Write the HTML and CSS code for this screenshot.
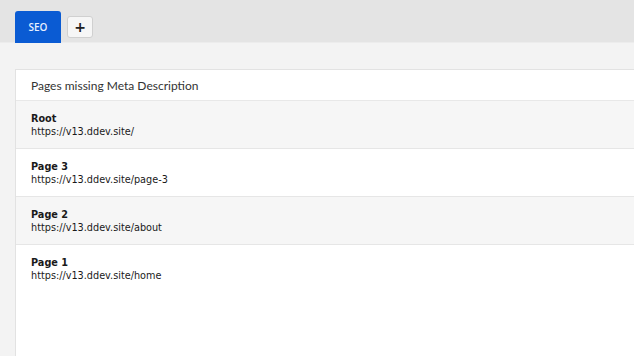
FILE: index.html
```html
<!DOCTYPE html>
<html lang="en">
<head>
    <meta charset="UTF-8">
    <meta name="viewport" content="width=device-width, initial-scale=1.0">
    <title>SEO</title>
    <link rel="stylesheet" href="styles.css">
</head>
<body>
    <div class="tabbar">
        <button class="tab active">SEO</button>
        <button class="tab-add">+</button>
    </div>
    <div class="content">
        <div class="panel">
            <div class="panel-heading">Pages missing Meta Description</div>
            <div class="row">
                <div class="row-title">Root</div>
                <div class="row-url">https://v13.ddev.site/</div>
            </div>
            <div class="row">
                <div class="row-title">Page 3</div>
                <div class="row-url">https://v13.ddev.site/page-3</div>
            </div>
            <div class="row">
                <div class="row-title">Page 2</div>
                <div class="row-url">https://v13.ddev.site/about</div>
            </div>
            <div class="row">
                <div class="row-title">Page 1</div>
                <div class="row-url">https://v13.ddev.site/home</div>
            </div>
        </div>
    </div>
</body>
</html>
```

FILE: styles.css
```css
body {
    margin: 0;
    height: 100vh;
    display: flex;
    flex-direction: column;
    background-color: #f3f3f3;
    font-family: "DejaVu Sans", Verdana, sans-serif;
    color: #1a1a1a;
    overflow: hidden;
}

.tabbar {
    display: flex;
    align-items: flex-start;
    gap: 6px;
    height: 43px;
    padding: 11px 0 0 15px;
    box-sizing: border-box;
    background-color: #e4e4e4;
    border-bottom: 1px solid #ececec;
}

.tab {
    width: 46px;
    height: 32px;
    border: none;
    border-radius: 3px 3px 0 0;
    background-color: #0a5bd3;
    color: #e8f0ff;
    font-family: "Open Sans", sans-serif;
    font-size: 10px;
    font-weight: 600;
    padding: 0;
}

.tab-add {
    width: 26px;
    height: 22px;
    margin-top: 5px;
    border: 1px solid #d0d0d0;
    border-radius: 3px;
    background-color: #f6f6f6;
    color: #222;
    font-family: "DejaVu Sans", sans-serif;
    font-size: 14px;
    font-weight: bold;
    line-height: 18px;
    padding: 0;
}

.content {
    flex: 1;
    padding: 26px 0 0 15px;
}

.panel {
    height: 100%;
    background-color: #fff;
    border: 1px solid #e2e2e2;
    border-right: none;
    border-bottom: none;
}

.panel-heading {
    height: 30px;
    line-height: 31px;
    padding-left: 15px;
    font-family: Lato, "Open Sans", sans-serif;
    font-size: 12px;
    color: #333;
    border-bottom: 1px solid #e8e8e8;
}

.row {
    height: 48px;
    padding: 11px 0 0 15px;
    box-sizing: border-box;
    border-bottom: 1px solid #e6e6e6;
    font-size: 9.7px;
}

.row:nth-child(even) {
    background-color: #f6f6f6;
}

.row:last-child {
    border-bottom: none;
}

.row-title {
    font-weight: bold;
    line-height: 13px;
}

.row-url {
    line-height: 13px;
}
```
